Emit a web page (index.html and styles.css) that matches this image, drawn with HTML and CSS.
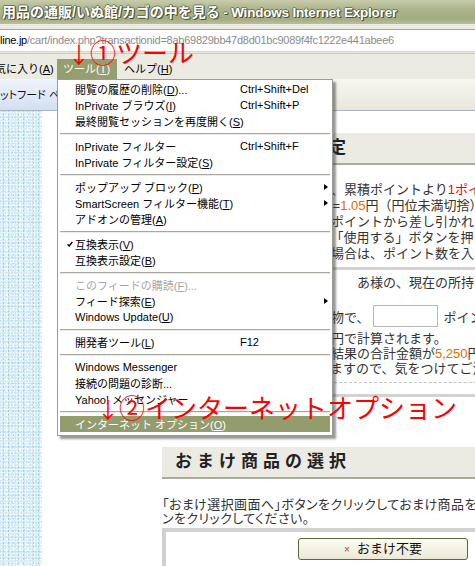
FILE: index.html
```html
<!DOCTYPE html>
<html lang="ja">
<head>
<meta charset="utf-8">
<title>用品の通販/いぬ館/カゴの中を見る - Windows Internet Explorer</title>
<link rel="stylesheet" href="styles.css">
</head>
<body>
<div class="window">
  <div class="titlebar">用品の通販/いぬ館/カゴの中を見る<span class="app"> - Windows Internet Explorer</span></div>
  <div class="addressrow">
    <div class="addressfield"><span class="host">line.jp</span><span class="path">/cart/index.php?transactionid=8ab69829bb47d8d01bc9089f4fc1222e441abee6</span></div>
  </div>
  <div class="menubar">
    <span class="mitem first">気に入り(<u>A</u>)</span>
    <span class="mitem active">ツール(<u>T</u>)</span>
    <span class="mitem">ヘルプ(<u>H</u>)</span>
  </div>
  <div class="favbar"><span class="tab">ットフード ペ</span></div>
  <div class="content">
    <div class="strip"></div>
    <div class="main">
      <div class="col">
        <h2 class="sechead">ポイント使用設定</h2>
        <p class="para">ポイントをご使用になる際は、累積ポイントより<span class="red">1ポイント</span>につき<br>ご利用金額に充当します。1P=<span class="orange">1.05</span>円（円位未満切捨）で<br>ご使用分は、ご注文時に累積ポイントから差し引かれます。<br>ご使用ポイント数を入力して「使用する」ボタンを押してください。<br>ポイントを今回は使用しない場合は、ポイント数を入れずにお進みください。</p>
        <div class="box pointbox">
          <p class="greet">会員番号：００１２３４５　　あ様の、現在の所持ポイントは 120 ポイントです。</p>
          <div class="inrow">※ポイントは今回のお買い物で、<span class="field"></span>ポイント使用する</div>
          <p class="notes">※　１ポイント＝１．０５円で計算されます。<br>※ポイントをご使用された結果の合計金額が<span class="orange">5,250</span>円未満の場合は<br>送料無料対象外となっていますので、気をつけてご注文ください。</p>
          <div class="dashed"></div>
        </div>
        <h2 class="sechead second">おまけ商品の選択</h2>
        <p class="para para2">「おまけ選択画面へ」ボタンをクリックしておまけ商品を選択してください。<br>ンをクリックしてください。</p>
        <div class="box btnbox">
          <button class="btn" type="button"><span class="x">×</span>おまけ不要</button>
        </div>
      </div>
    </div>
  </div>

  <div class="dropdown">
    <div class="mi"><span class="gut"></span><span class="lbl">閲覧の履歴の削除(<u>D</u>)...</span><span class="key">Ctrl+Shift+Del</span></div>
    <div class="mi"><span class="gut"></span><span class="lbl">InPrivate ブラウズ(<u>I</u>)</span><span class="key">Ctrl+Shift+P</span></div>
    <div class="mi"><span class="gut"></span><span class="lbl">最終閲覧セッションを再度開く(<u>S</u>)</span></div>
    <div class="sep"></div>
    <div class="mi"><span class="gut"></span><span class="lbl">InPrivate フィルター</span><span class="key">Ctrl+Shift+F</span></div>
    <div class="mi"><span class="gut"></span><span class="lbl">InPrivate フィルター設定(<u>S</u>)</span></div>
    <div class="sep"></div>
    <div class="mi"><span class="gut"></span><span class="lbl">ポップアップ ブロック(<u>P</u>)</span><span class="sub"></span></div>
    <div class="mi"><span class="gut"></span><span class="lbl">SmartScreen フィルター機能(<u>T</u>)</span><span class="sub"></span></div>
    <div class="mi"><span class="gut"></span><span class="lbl">アドオンの管理(<u>A</u>)</span></div>
    <div class="sep"></div>
    <div class="mi"><span class="gut"><svg class="check" width="6" height="6" viewBox="0 0 6 6"><path d="M0.6 3.2 L2.2 4.9 L5.4 1" fill="none" stroke="#000" stroke-width="1.3"/></svg></span><span class="lbl">互換表示(<u>V</u>)</span></div>
    <div class="mi"><span class="gut"></span><span class="lbl">互換表示設定(<u>B</u>)</span></div>
    <div class="sep"></div>
    <div class="mi dis"><span class="gut"></span><span class="lbl">このフィードの購読(<u>F</u>)...</span></div>
    <div class="mi"><span class="gut"></span><span class="lbl">フィード探索(<u>E</u>)</span><span class="sub"></span></div>
    <div class="mi"><span class="gut"></span><span class="lbl">Windows Update(<u>U</u>)</span></div>
    <div class="sep"></div>
    <div class="mi"><span class="gut"></span><span class="lbl">開発者ツール(<u>L</u>)</span><span class="key">F12</span></div>
    <div class="sep"></div>
    <div class="mi"><span class="gut"></span><span class="lbl">Windows Messenger</span></div>
    <div class="mi"><span class="gut"></span><span class="lbl">接続の問題の診断...</span></div>
    <div class="mi"><span class="gut"></span><span class="lbl">Yahoo! メッセンジャー</span></div>
    <div class="sep"></div>
    <div class="mi hl"><span class="gut"></span><span class="lbl">インターネット オプション(<u>O</u>)</span></div>
  </div>

  <div class="note note1"><span class="arr">↓</span>①ツール</div>
  <div class="note note2"><span class="arr">↓</span>②インターネットオプション</div>
</div>
</body>
</html>
```

FILE: styles.css
```css
html, body {
  margin: 0;
  padding: 0;
}
body {
  width: 475px;
  height: 566px;
  overflow: hidden;
  background: #fff;
  font-family: "Liberation Sans", "Noto Sans CJK JP", sans-serif;
  color: #000;
}
.window {
  position: relative;
  width: 475px;
  height: 566px;
  overflow: hidden;
  display: flex;
  flex-direction: column;
}

/* title bar */
.titlebar {
  flex: none;
  height: 24px;
  line-height: 25px;
  padding-left: 2px;
  background: linear-gradient(#c7cdab 0%, #adb58c 35%, #a3ab80 78%, #b9bf9d 100%);
  color: #fff;
  font-weight: bold;
  font-size: 14px;
  white-space: nowrap;
  text-shadow: 1px 1px 0 #4a5134, -1px 0 0 #6f7656, 0 -1px 0 #6f7656, 1px 0 0 #4a5134;
}
.titlebar .app {
  font-size: 13.5px;
  letter-spacing: -0.2px;
}

/* address row */
.addressrow {
  flex: none;
  height: 30px;
  box-sizing: border-box;
  padding-top: 5px;
  background: #ecebe2;
  border-bottom: 1px solid #c9c8bc;
}
.addressfield {
  height: 23px;
  box-sizing: border-box;
  border-top: 1px solid #a4a49a;
  border-bottom: 1px solid #d6d6cc;
  background: #fff;
  font-size: 11px;
  letter-spacing: -0.25px;
  line-height: 21px;
  white-space: nowrap;
  overflow: hidden;
}
.host { color: #000; }
.path { color: #8c8c8c; }

/* menu bar */
.menubar {
  flex: none;
  height: 26px;
  box-sizing: border-box;
  padding-top: 5px;
  background: #ecebe1;
  display: flex;
  font-size: 11px;
  white-space: nowrap;
  border-bottom: 1px solid #f6f5ee;
}
.mitem {
  height: 21px;
  line-height: 21px;
  box-sizing: border-box;
}
.mitem.first {
  width: 62px;
  margin-left: -5px;
}
.mitem.active {
  width: 60px;
  padding-left: 6px;
  background: #959e6e;
  color: #fff;
}
.mitem:last-child {
  padding-left: 7px;
}

/* favorites bar */
.favbar {
  flex: none;
  height: 31px;
  box-sizing: border-box;
  background: linear-gradient(#f6f5ee, #e8e7dc);
  border-bottom: 1px solid #a7b4c6;
  display: flex;
}
.tab {
  width: 70px;
  height: 30px;
  line-height: 30px;
  font-size: 11px;
  white-space: nowrap;
  overflow: hidden;
  background: linear-gradient(#eef3fb, #d3dff2);
  color: #111;
  font-feature-settings: "palt";
}

/* page content */
.content {
  flex: 1;
  display: grid;
  grid-template-columns: 42px 1fr;
  overflow: hidden;
  min-height: 0;
}
.strip {
  background-color: #d2eaf5;
  background-image:
    radial-gradient(circle, #ffffff 0.7px, transparent 1.1px),
    radial-gradient(circle, #9ccfe9 0.7px, transparent 1.1px),
    radial-gradient(circle, #f4fbfe 0.9px, transparent 1.3px),
    radial-gradient(circle, #b4dbef 0.8px, transparent 1.2px);
  background-size: 3px 3px, 5px 4px, 7px 5px, 4px 7px;
  background-position: 0 0, 1px 2px, 3px 1px, 2px 3px;
}
.main {
  min-width: 0;
  padding-left: 120px;
  padding-top: 22px;
}
.col {
  width: 442px;
  font-family: "Liberation Sans", "Noto Sans CJK JP", sans-serif;
  color: #333;
}
.sechead {
  margin: 0;
  height: 30px;
  line-height: 30px;
  background: #ebebe4;
  border-bottom: 2px solid #a9ac98;
  font-size: 17px;
  font-weight: bold;
  letter-spacing: 5px;
  padding-left: 13px;
  color: #222;
  white-space: nowrap;
}
.sechead.second {
  margin-top: 50px;
}
.para {
  margin: 17px 0 0;
  font-size: 13px;
  line-height: 16px;
  white-space: nowrap;
}
.para2 {
  margin-top: 19px;
  line-height: 14px;
  font-feature-settings: "palt";
  letter-spacing: 0.4px;
}
.red { color: #ff0000; }
.orange { color: #e06b00; }

.box {
  border: 3px solid #d2d2d2;
  margin-top: 5px;
}
.pointbox {
  padding: 5px 10px 11px 10px;
  font-size: 13px;
  white-space: nowrap;
}
.greet {
  margin: 0;
  line-height: 16px;
}
.inrow {
  margin-top: 14px;
  height: 22px;
  display: flex;
  align-items: center;
}
.field {
  width: 65px;
  height: 22px;
  box-sizing: border-box;
  border: 1px solid #b8b8b8;
  background: #fff;
  margin: 0 5px 0 4px;
}
.notes {
  margin: 4px 0 0;
  line-height: 15px;
}
.dashed {
  margin-top: 6px;
  border-top: 1px dashed #c4c4c4;
}
.btnbox {
  border-width: 4px;
  border-color: #d0d0d0;
  margin-top: 2px;
  padding-top: 6px;
  height: 120px;
  text-align: center;
}
.btn {
  width: 170px;
  height: 22px;
  border: 1px solid #5b6637;
  border-radius: 3px;
  background: linear-gradient(#fcfbf3, #ebe9d5);
  font-family: "Liberation Sans", "Noto Sans CJK JP", sans-serif;
  font-size: 13px;
  color: #111;
  padding: 0;
  line-height: 20px;
}
.btn .x {
  color: #c0392b;
  font-size: 10px;
  margin-right: 7px;
}

/* dropdown menu */
.dropdown {
  position: absolute;
  left: 57px;
  top: 79px;
  width: 276px;
  box-sizing: border-box;
  border: 1px solid #9c9c96;
  background: #fff;
  padding: 1px 0 3px;
  box-shadow: 3px 3px 2px rgba(50, 50, 50, 0.5);
  font-size: 11px;
  white-space: nowrap;
}
.mi {
  display: flex;
  align-items: center;
  height: 16px;
  margin: 0 1px;
}
.gut {
  flex: none;
  width: 16px;
  box-sizing: border-box;
  padding-left: 8px;
  display: flex;
  align-items: center;
}
.lbl {
  flex: none;
  width: 165px;
}
.sub {
  margin-left: auto;
  margin-right: 3px;
  width: 0;
  height: 0;
  border-left: 4px solid #000;
  border-top: 3px solid transparent;
  border-bottom: 3px solid transparent;
}
.mi.dis { color: #a6a6a6; }
.mi.hl {
  background: #939c6c;
  color: #fff;
  margin: 0 2px;
}
.mi.hl .gut { width: 15px; }
.sep {
  margin: 4px 2px 3px;
  border-top: 1px solid #a7a7a0;
  border-bottom: 1px solid #ecece6;
}

/* red annotations */
.note {
  position: absolute;
  color: #ff0000;
  font-family: "Noto Sans CJK JP", sans-serif;
  font-size: 26px;
  line-height: 30px;
  white-space: nowrap;
}
.note .arr {
  font-size: 22px;
}
.note1 {
  left: 68px;
  top: 37px;
}
.note2 {
  left: 97px;
  top: 392px;
}
```
